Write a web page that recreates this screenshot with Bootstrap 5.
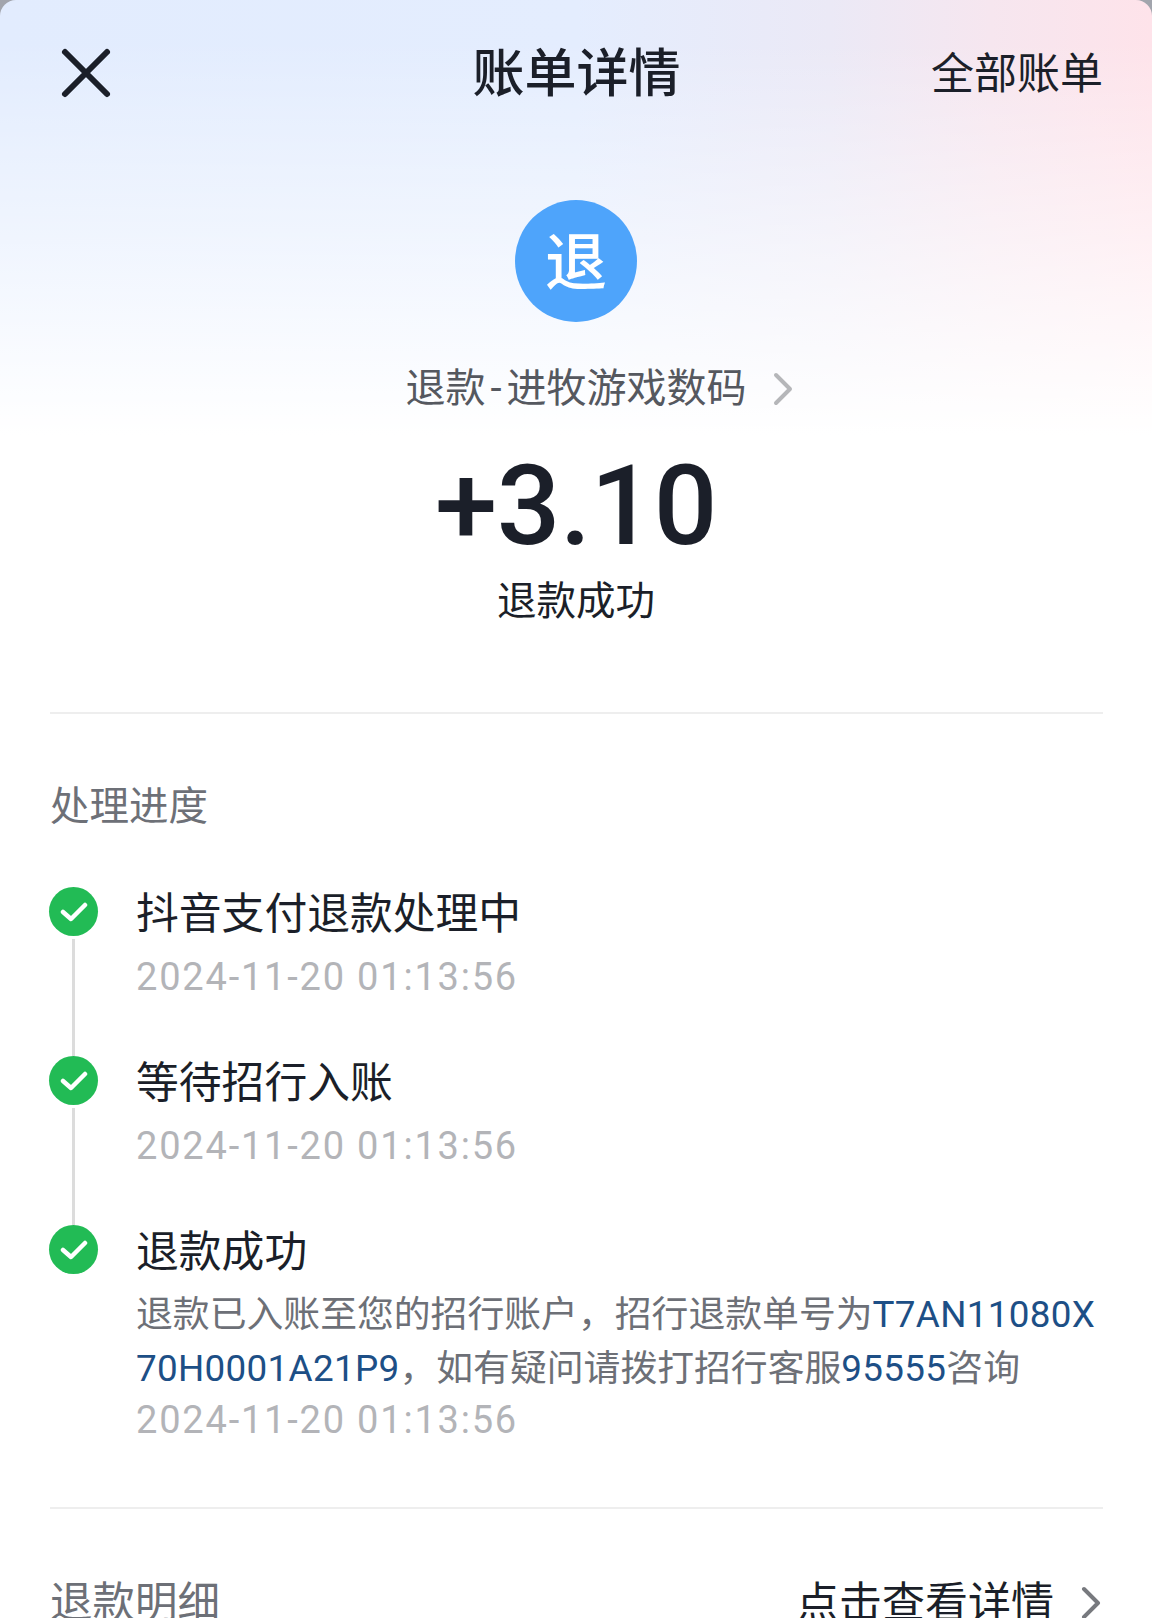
<!DOCTYPE html>
<html lang="zh-CN">

<head>
    <meta charset="UTF-8" />
    <meta name="viewport" content="width=device-width, initial-scale=1.0" />
    <title>账单详情</title>
    <link href="https://cdn.jsdelivr.net/npm/bootstrap@5.3.0/dist/css/bootstrap.min.css" rel="stylesheet" />
    <style>
        html, body {
            height: 1618px;
            overflow: hidden;
        }

        html {
            background: #a2a5ad;
        }

        body {
            background: transparent;
            font-family: Roboto, "Noto Sans CJK SC", sans-serif;
            color: #1b1f29;
        }

        .bill-page {
            height: 1618px;
            overflow: hidden;
            padding: 0 49px 0 50px;
            border-radius: 16px 16px 0 0;
            background:
                linear-gradient(to bottom, rgba(255, 255, 255, 0) 40px, rgba(255, 255, 255, 0.5) 245px, #fff 435px),
                linear-gradient(to right, #e2ecfe 0, #e4edfe 50%, #ebe9f6 72%, #f6e6ef 86%, #fee3ea 100%);
        }

        .top-bar {
            height: 146px;
            position: relative;
        }

        .top-bar svg {
            margin-left: 10px;
        }

        .bill-title {
            position: absolute;
            left: 0;
            right: 0;
            top: 40px;
            text-align: center;
            font-size: 52px;
            line-height: 70px;
            font-weight: 500;
        }

        .all-bills {
            margin-top: 2px;
            font-size: 43px;
            line-height: 60px;
        }

        .summary {
            padding-right: 1px;
        }

        .refund-logo {
            width: 122px;
            height: 122px;
            margin-top: 54px;
            padding-top: 5px;
            background: #4ea4fb;
            color: #fff;
            font-size: 62px;
            font-weight: 500;
            line-height: 1;
        }

        .merchant {
            margin-top: 38px;
            padding-left: 47px;
            font-size: 40px;
            line-height: 58px;
            color: #55585f;
        }

        .merchant svg {
            margin-left: 25px;
        }

        .dash {
            padding: 0 5px;
        }

        .amount {
            margin-top: 23px;
            font-size: 112px;
            line-height: 130px;
            font-weight: 500;
            letter-spacing: -0.5px;
        }

        .amount-status {
            margin-top: 2px;
            font-size: 39.5px;
            line-height: 58px;
        }

        .rule {
            height: 2px;
            background: #eeeeee;
        }

        .rule-top {
            margin-top: 81px;
        }

        .section-label {
            margin-top: 64px;
            font-size: 39.5px;
            line-height: 58px;
            color: #6d7077;
        }

        .steps {
            margin-top: 51px;
            margin-left: -1px;
        }

        .step-rail {
            width: 49px;
            margin-right: 38px;
        }

        .step-dot {
            width: 49px;
            height: 49px;
            background: #22bb55;
        }

        .step-line {
            width: 3px;
            background: #dcdcdc;
            margin-top: 3px;
        }

        .step-body {
            padding-top: 2px;
            padding-bottom: 51px;
        }

        .step-title {
            font-size: 42.8px;
            line-height: 50px;
        }

        .step-time {
            margin-top: 10px;
            font-size: 38px;
            line-height: 56px;
            letter-spacing: 1.8px;
            color: #b3b4b8;
        }

        .step-note {
            margin-top: 11px;
            font-size: 36.85px;
            line-height: 53.5px;
            color: #6d7077;
            white-space: nowrap;
        }

        .step-note + .step-time {
            margin-top: -3px;
        }

        .step-note span {
            color: #1d4f86;
            letter-spacing: 0.3px;
        }

        .last-step {
            padding-bottom: 0;
        }

        .rule-bottom {
            margin-top: 59px;
        }

        .detail-row {
            margin-top: 64px;
            font-size: 43px;
            line-height: 60px;
        }

        .detail-row .section-label {
            margin-top: 0;
            font-size: 42.5px;
            line-height: 60px;
        }

        .detail-row svg {
            margin-left: 26px;
            margin-right: 1px;
        }
    </style>
</head>

<body>
    <div class="bill-page">
        <div class="top-bar d-flex align-items-center justify-content-between">
            <svg width="52" height="52" viewBox="0 0 52 52" fill="none" stroke="#1b1f29" stroke-width="6" stroke-linecap="round">
                <path d="M5 5 L47 47 M47 5 L5 47" />
            </svg>
            <div class="bill-title">账单详情</div>
            <div class="all-bills">全部账单</div>
        </div>

        <div class="summary d-flex flex-column align-items-center">
            <div class="refund-logo rounded-circle d-flex align-items-center justify-content-center">退</div>
            <div class="merchant d-flex align-items-center">
                <span>退款<span class="dash">-</span>进牧游戏数码</span>
                <svg width="22" height="34" viewBox="0 0 22 34" fill="none" stroke="#b5b6b9" stroke-width="4" stroke-linecap="round" stroke-linejoin="round">
                    <path d="M4 3 L18 17 L4 31" />
                </svg>
            </div>
            <div class="amount">+3.10</div>
            <div class="amount-status">退款成功</div>
        </div>

        <div class="rule rule-top"></div>

        <div class="section-label">处理进度</div>

        <div class="steps">
            <div class="d-flex">
                <div class="step-rail d-flex flex-column align-items-center">
                    <div class="step-dot rounded-circle d-flex align-items-center justify-content-center">
                        <svg width="28" height="22" viewBox="0 0 28 22" fill="none" stroke="#fff" stroke-width="4.5" stroke-linecap="round" stroke-linejoin="round"><path d="M3 11 L11 18 L25 4" /></svg>
                    </div>
                    <div class="step-line flex-grow-1"></div>
                </div>
                <div class="step-body">
                    <div class="step-title">抖音支付退款处理中</div>
                    <div class="step-time">2024-11-20 01:13:56</div>
                </div>
            </div>
            <div class="d-flex">
                <div class="step-rail d-flex flex-column align-items-center">
                    <div class="step-dot rounded-circle d-flex align-items-center justify-content-center">
                        <svg width="28" height="22" viewBox="0 0 28 22" fill="none" stroke="#fff" stroke-width="4.5" stroke-linecap="round" stroke-linejoin="round"><path d="M3 11 L11 18 L25 4" /></svg>
                    </div>
                    <div class="step-line flex-grow-1"></div>
                </div>
                <div class="step-body">
                    <div class="step-title">等待招行入账</div>
                    <div class="step-time">2024-11-20 01:13:56</div>
                </div>
            </div>
            <div class="d-flex">
                <div class="step-rail d-flex flex-column align-items-center">
                    <div class="step-dot rounded-circle d-flex align-items-center justify-content-center">
                        <svg width="28" height="22" viewBox="0 0 28 22" fill="none" stroke="#fff" stroke-width="4.5" stroke-linecap="round" stroke-linejoin="round"><path d="M3 11 L11 18 L25 4" /></svg>
                    </div>
                </div>
                <div class="step-body last-step">
                    <div class="step-title">退款成功</div>
                    <div class="step-note">退款已入账至您的招行账户，招行退款单号为<span>T7AN11080X</span><br><span>70H0001A21P9</span>，如有疑问请拨打招行客服<span>95555</span>咨询</div>
                    <div class="step-time">2024-11-20 01:13:56</div>
                </div>
            </div>
        </div>

        <div class="rule rule-bottom"></div>

        <div class="detail-row d-flex align-items-center justify-content-between">
            <div class="section-label">退款明细</div>
            <div class="d-flex align-items-center">
                <span>点击查看详情</span>
                <svg width="22" height="34" viewBox="0 0 22 34" fill="none" stroke="#77797e" stroke-width="4" stroke-linecap="round" stroke-linejoin="round">
                    <path d="M4 3 L18 17 L4 31" />
                </svg>
            </div>
        </div>
    </div>

    <script src="https://cdn.jsdelivr.net/npm/bootstrap@5.3.0/dist/js/bootstrap.bundle.min.js"></script>
</body>

</html>
